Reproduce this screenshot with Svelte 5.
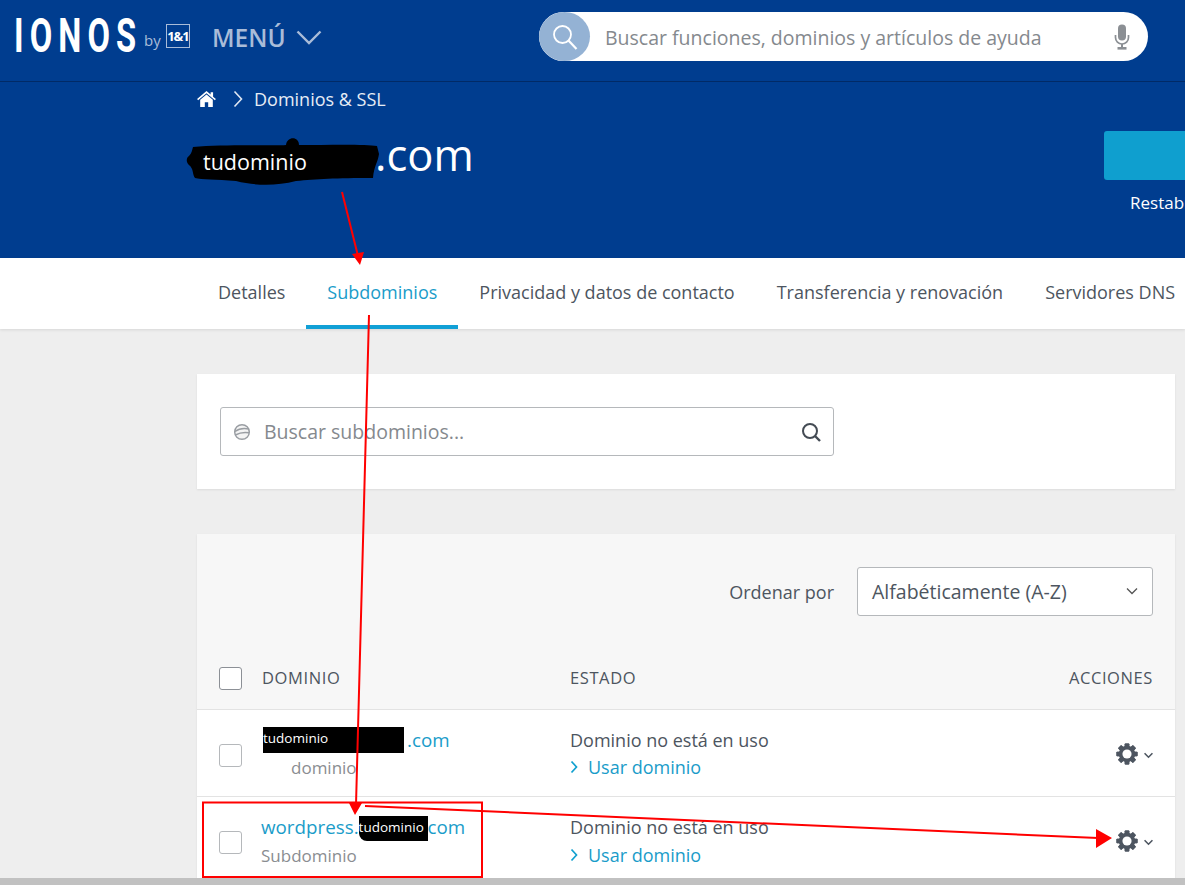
<script>
    const tabs = ["Detalles", "Subdominios", "Privacidad y datos de contacto", "Transferencia y renovación", "Servidores DNS"];
    const teeth = [0, 45, 90, 135, 180, 225, 270, 315];
</script>

{#snippet gear()}
    <svg class="gear" viewBox="0 0 24 24" aria-hidden="true">
        {#each teeth as angle}
            <rect x="9.5" y="0.5" width="5" height="23" rx="0.8" transform="rotate({angle} 12 12)" fill="#4d5560" />
        {/each}
        <circle cx="12" cy="12" r="9" fill="#4d5560" />
        <circle cx="12" cy="12" r="5" fill="#fff" />
    </svg>
    <svg class="caret" viewBox="0 0 12 8" aria-hidden="true">
        <path d="M1.5 1.5 6 6l4.5-4.5" fill="none" stroke="#4d5560" stroke-width="1.8" />
    </svg>
{/snippet}

{#snippet useDomain()}
    <a class="use" href="#top">
        <svg viewBox="0 0 8 14" aria-hidden="true"><path d="M1.5 1.5 6.5 7l-5 5.5" fill="none" stroke="#11a0cf" stroke-width="1.7" /></svg>
        Usar dominio
    </a>
{/snippet}

<div class="page" id="top">
    <div class="viewport">
        <header class="topbar">
            <div class="logo">
                <span class="wordmark">IONOS</span>
                <span class="by">by</span>
                <span class="oneandone">1&amp;1</span>
            </div>
            <div class="menu">
                MENÚ
                <svg viewBox="0 0 26 15" aria-hidden="true"><path d="M1.5 1.5 13 13 24.5 1.5" fill="none" stroke="#a9bcd8" stroke-width="2.4" /></svg>
            </div>
            <div class="omnibox">
                <span class="omni-icon">
                    <svg viewBox="0 0 26 26" aria-hidden="true">
                        <circle cx="10.5" cy="10.5" r="8.5" fill="none" stroke="#fff" stroke-width="1.8" />
                        <path d="m16.5 16.5 8 8.5" stroke="#fff" stroke-width="2.2" />
                    </svg>
                </span>
                <span class="omni-text">Buscar funciones, dominios y artículos de ayuda</span>
                <svg class="mic" viewBox="0 0 16 26" aria-hidden="true">
                    <rect x="4" y="0.5" width="8" height="16" rx="4" fill="#8b8f94" />
                    <path d="M1.5 11v2.5a6.5 6.5 0 0 0 13 0V11" fill="none" stroke="#8b8f94" stroke-width="1.7" />
                    <path d="M8 20v3" stroke="#8b8f94" stroke-width="2" />
                    <rect x="3.5" y="23" width="9" height="2.6" fill="#8b8f94" />
                </svg>
            </div>
        </header>

        <section class="hero">
            <nav class="crumbs">
                <svg class="home" viewBox="0 0 20 17" aria-hidden="true">
                    <path d="M10 0 0 8.6l1.1 1.2L10 2.3l8.9 7.5L20 8.6l-3-2.6V1.2h-2.6v2.6z" fill="#fff" />
                    <path d="M10 3.8 3.3 9.4V17h4.9v-5h3.6v5h4.9V9.4z" fill="#fff" />
                </svg>
                <svg class="sep" viewBox="0 0 10 18" aria-hidden="true"><path d="M1.5 1.5 8.5 9l-7 7.5" fill="none" stroke="#dfe7f2" stroke-width="1.6" /></svg>
                <span>Dominios &amp; SSL</span>
            </nav>
            <div class="hero-main">
                <h1 class="title">
                    <span class="blot">
                        <svg viewBox="0 0 195 50" aria-hidden="true">
                            <path d="M7 11C40 8 90 10 100 9C101 0 113 0 113 9C140 9 180 8 191 10L193 18C192 26 188 30 187 42C150 42 130 43 110 45C90 50 70 50 50 45C30 43 15 44 9 42C6 38 8 33 3 29C0 26 0 22 3 20C6 17 6 14 7 11z" fill="#000" />
                        </svg>
                        <span class="blot-text">tudominio</span>
                    </span>.com
                </h1>
                <div class="hero-action">
                    <span class="hero-button"></span>
                    <span class="hero-note">Restablecer</span>
                </div>
            </div>
        </section>

        <nav class="tabs">
            {#each tabs as tab, i}
                <span class="tab" class:active={i === 1}>{tab}</span>
            {/each}
        </nav>

        <main class="content">
            <section class="card search-card">
                <div class="field">
                    <svg class="globe" viewBox="0 0 18 18" aria-hidden="true">
                        <circle cx="9" cy="9" r="7.3" fill="#f4f4f4" stroke="#9a9ea3" stroke-width="1.5" />
                        <path d="M2 8.5C6 5.5 11 4.8 16 6M2.3 12C7 9.5 11.5 9 16 9.8" fill="none" stroke="#9a9ea3" stroke-width="1.5" />
                    </svg>
                    <span class="field-text">Buscar subdominios...</span>
                    <svg class="field-search" viewBox="0 0 20 20" aria-hidden="true">
                        <circle cx="9" cy="9" r="7" fill="none" stroke="#444b54" stroke-width="2" />
                        <path d="m14 14 5 5" stroke="#444b54" stroke-width="2.4" />
                    </svg>
                </div>
            </section>

            <section class="card list-card">
                <div class="sorter">
                    <span class="sort-label">Ordenar por</span>
                    <div class="select">
                        <span>Alfabéticamente (A-Z)</span>
                        <svg viewBox="0 0 12 8" aria-hidden="true"><path d="M1 1.5 6 6.5l5-5" fill="none" stroke="#555" stroke-width="1.3" /></svg>
                    </div>
                </div>
                <div class="row head">
                    <span class="check"></span>
                    <span>DOMINIO</span>
                    <span>ESTADO</span>
                    <span class="actions">ACCIONES</span>
                </div>
                <div class="row item first">
                    <span class="check"></span>
                    <div>
                        <div class="domain"><span class="mark wide">tudominio</span><span class="tld">.com</span></div>
                        <div class="kind cut">dominio</div>
                    </div>
                    <div>
                        <div class="state">Dominio no está en uso</div>
                        {@render useDomain()}
                    </div>
                    <div class="actions">{@render gear()}</div>
                </div>
                <div class="row item second">
                    <span class="check"></span>
                    <div>
                        <div class="domain">wordpress.<span class="mark small">tudominio</span>.com</div>
                        <div class="kind">Subdominio</div>
                    </div>
                    <div>
                        <div class="state">Dominio no está en uso</div>
                        {@render useDomain()}
                    </div>
                    <div class="actions">{@render gear()}</div>
                </div>
            </section>
        </main>
    </div>
    <div class="hscroll"></div>

    <!-- hand drawn annotations on top of the screenshot -->
    <svg class="notes" viewBox="0 0 1185 889" aria-hidden="true">
        <path d="M342 192 358 256M369 315 356 805M365 806 1098 838" stroke="#f00" stroke-width="2" fill="none" />
        <path d="M352 254 364 252 360 265zM349 803 362 803 355 815zM1096 829 1112 838 1096 848z" fill="#f00" />
        <rect x="203" y="802.5" width="279" height="74.5" fill="none" stroke="#f00" stroke-width="2" />
    </svg>
</div>

<style>
    :global(body) {
        background: #fff;
    }

    .page {
        position: relative;
        display: flex;
        flex-direction: column;
        height: 889px;
        padding-bottom: 4px;
        box-sizing: border-box;
        overflow: hidden;
        font-family: "Open Sans", sans-serif;
        color: #4d5560;
    }

    .viewport {
        flex: 1;
        min-height: 0;
        overflow: hidden;
        background: #eee;
    }

    .hscroll {
        height: 7px;
        flex: none;
        background: #c1c1c1;
    }

    .notes {
        position: absolute;
        inset: 0;
        width: 1185px;
        height: 889px;
        pointer-events: none;
    }

    .topbar {
        display: flex;
        align-items: center;
        height: 82px;
        padding-left: 16px;
        box-sizing: border-box;
        background: #003d8f;
        border-bottom: 1px solid #012a66;
    }

    .logo {
        display: flex;
        align-items: center;
        width: 196px;
        margin-top: -10px;
        flex: none;
        color: #fff;
    }

    .wordmark {
        width: 128px;
        margin-left: -2px;
        margin-right: 2px;
        flex: none;
        font-family: "Roboto", sans-serif;
        font-size: 48px;
        font-weight: 700;
        letter-spacing: 9px;
        line-height: 1;
        transform: scaleX(0.68);
        transform-origin: left center;
        white-space: nowrap;
    }

    .by {
        width: 16px;
        margin: 8px 6px 0 0;
        font-size: 15px;
        color: #a9bcd8;
    }

    .oneandone {
        display: flex;
        align-items: center;
        justify-content: center;
        width: 24px;
        height: 24px;
        box-sizing: border-box;
        font-size: 13px;
        font-weight: 700;
        letter-spacing: -1px;
        border: 1px solid #a9bcd8;
    }

    .menu {
        display: flex;
        align-items: center;
        gap: 10px;
        width: 327px;
        margin-top: -7px;
        flex: none;
        font-size: 24.5px;
        font-weight: 600;
        color: #a9bcd8;
    }

    .menu svg {
        width: 26px;
        height: 15px;
    }

    .omnibox {
        display: flex;
        align-items: center;
        width: 609px;
        height: 49px;
        margin-top: -8px;
        border-radius: 25px;
        background: #fff;
    }

    .omni-icon {
        display: flex;
        align-items: center;
        justify-content: center;
        width: 51px;
        height: 49px;
        flex: none;
        border-radius: 50%;
        background: #94b2d4;
    }

    .omni-icon svg {
        width: 26px;
        height: 26px;
    }

    .omni-text {
        flex: 1;
        margin-left: 15px;
        padding-top: 2px;
        font-size: 19.5px;
        color: #85898e;
        white-space: nowrap;
    }

    .mic {
        width: 16px;
        height: 26px;
        margin-right: 18px;
    }

    .hero {
        height: 176px;
        padding-left: 197px;
        box-sizing: border-box;
        background: #003d8f;
        color: #fff;
        overflow: hidden;
    }

    .crumbs {
        display: flex;
        align-items: center;
        height: 34px;
        font-size: 18px;
        color: #e6ecf5;
    }

    .home {
        width: 19px;
        height: 16px;
        margin-right: 17px;
    }

    .sep {
        width: 10px;
        height: 18px;
        margin-right: 11px;
    }

    .hero-main {
        display: flex;
        justify-content: space-between;
        width: 988px;
        margin-top: 15px;
    }

    .title {
        margin: 0;
        display: flex;
        align-items: center;
        height: 46px;
        font-size: 43.5px;
        font-weight: 400;
    }

    .blot {
        position: relative;
        display: block;
        align-self: stretch;
        width: 178px;
    }

    .blot svg {
        position: absolute;
        left: -11px;
        top: 5px;
        width: 195px;
        height: 50px;
    }

    .blot-text {
        position: absolute;
        left: 6px;
        top: 16px;
        font-size: 21.5px;
        line-height: 30px;
    }

    .hero-action {
        display: flex;
        flex-direction: column;
        width: 81px;
        flex: none;
    }

    .hero-button {
        display: block;
        height: 49px;
        width: 120px;
        border-radius: 3px;
        background: #0f9fcf;
    }

    .hero-note {
        margin: 11px 0 0 26px;
        font-size: 17px;
        white-space: nowrap;
    }

    .tabs {
        display: flex;
        height: 71px;
        padding-left: 197px;
        box-sizing: border-box;
        background: #fff;
        box-shadow: 0 1px 3px rgba(0, 0, 0, 0.1);
        position: relative;
        white-space: nowrap;
        overflow: hidden;
        font-size: 18px;
    }

    .tab {
        display: flex;
        align-items: center;
        padding: 0 21px;
        border-bottom: 4px solid transparent;
    }

    .tab.active {
        color: #1a9cc9;
        border-bottom-color: #11a0d6;
    }

    .content {
        padding: 45px 10px 0 197px;
    }

    .card {
        box-shadow: 0 1px 2px rgba(0, 0, 0, 0.08);
    }

    .search-card {
        height: 115px;
        padding: 33px 23px 0;
        box-sizing: border-box;
        background: #fff;
    }

    .field {
        display: flex;
        align-items: center;
        width: 614px;
        height: 49px;
        padding: 0 12px;
        box-sizing: border-box;
        border: 1px solid #b5b8bb;
        border-radius: 3px;
    }

    .globe {
        width: 18px;
        height: 18px;
        margin-right: 13px;
    }

    .field-text {
        flex: 1;
        font-size: 19.5px;
        color: #85898e;
    }

    .field-search {
        width: 20px;
        height: 20px;
    }

    .list-card {
        margin-top: 45px;
        background: #f7f7f7;
    }

    .sorter {
        display: flex;
        align-items: center;
        justify-content: flex-end;
        gap: 23px;
        height: 116px;
        padding-right: 22px;
        font-size: 18px;
    }

    .select {
        display: flex;
        align-items: center;
        justify-content: space-between;
        width: 296px;
        height: 49px;
        margin-top: -2px;
        padding: 0 14px;
        box-sizing: border-box;
        background: #fff;
        border: 1px solid #b5b8bb;
        border-radius: 3px;
        font-size: 19.5px;
    }

    .select svg {
        width: 12px;
        height: 8px;
    }

    .row {
        display: grid;
        grid-template-columns: 43px 308px 1fr auto;
        align-items: start;
        padding: 17px 22px 0;
        box-sizing: border-box;
    }

    .head {
        align-items: center;
        height: 60px;
        padding: 0 22px 4px;
        font-size: 16.5px;
        letter-spacing: 0.6px;
        border-bottom: 1px solid #e3e3e3;
    }

    .item {
        background: #fff;
        font-size: 18px;
    }

    .first {
        height: 87px;
        border-bottom: 1px solid #e3e3e3;
    }

    .second {
        height: 82px;
    }

    .check {
        display: block;
        width: 23px;
        height: 23px;
        margin-top: 17px;
        box-sizing: border-box;
        background: #fff;
        border: 1px solid #b5b8bb;
        border-radius: 3px;
    }

    .head .check {
        margin-top: 2px;
        border-color: #8c9096;
    }

    .domain {
        display: flex;
        align-items: center;
        height: 26px;
        margin-left: -1px;
        font-size: 18.8px;
        color: #1a9cc9;
        white-space: nowrap;
    }

    .mark {
        position: relative;
        color: #fff;
        background: #000;
    }

    .mark.wide {
        display: flex;
        align-items: flex-start;
        width: 141px;
        height: 26px;
        margin-left: 2px;
        font-size: 13.5px;
        line-height: 22px;
    }

    .tld {
        margin-left: 3px;
    }

    .mark.small {
        display: flex;
        align-items: center;
        width: 69px;
        height: 23px;
        margin-right: -5px;
        font-size: 13.5px;
        border-bottom-left-radius: 8px;
        box-shadow: 0 2px 0 #000;
    }

    .kind {
        margin-top: 3px;
        margin-left: -1px;
        font-size: 17px;
        line-height: 26px;
        color: #8a8d91;
    }

    .first .kind {
        margin-top: 2px;
    }

    .kind.cut {
        padding-left: 30px;
    }

    .state {
        line-height: 26px;
    }

    .use {
        display: flex;
        align-items: center;
        gap: 10px;
        margin-top: 2px;
        line-height: 26px;
        color: #1a9cc9;
        text-decoration: none;
    }

    .first .use {
        margin-top: 1px;
    }

    .use svg {
        width: 8px;
        height: 14px;
    }

    .actions {
        display: flex;
        align-items: center;
        justify-content: flex-end;
        gap: 5px;
    }

    .item .actions {
        margin: 16px -1px 0 0;
    }

    .gear {
        width: 22px;
        height: 22px;
    }

    .caret {
        width: 11px;
        height: 7px;
        margin-top: 2px;
    }
</style>
